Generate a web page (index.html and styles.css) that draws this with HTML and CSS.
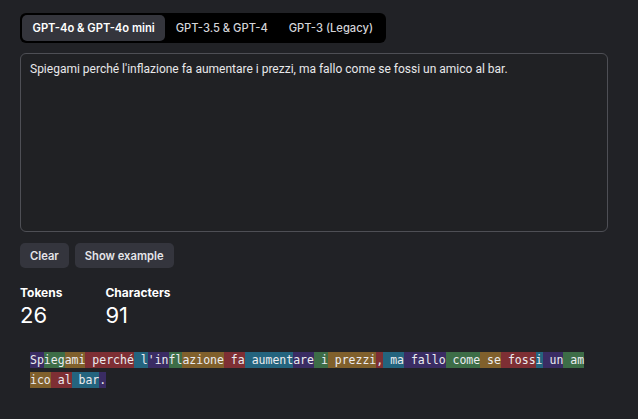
FILE: index.html
```html
<!DOCTYPE html>
<html lang="it">
<head>
<meta charset="utf-8">
<title>Tokenizer</title>
<link rel="stylesheet" href="styles.css">
</head>
<body>
<main class="page">
  <div class="tabs">
    <button class="tab tab-active">GPT-4o &amp; GPT-4o mini</button>
    <button class="tab">GPT-3.5 &amp; GPT-4</button>
    <button class="tab">GPT-3 (Legacy)</button>
  </div>
  <div class="input">Spiegami perché l'inflazione fa aumentare i prezzi, ma fallo come se fossi un amico al bar.</div>
  <div class="actions">
    <button class="btn">Clear</button>
    <button class="btn">Show example</button>
  </div>
  <div class="stats">
    <div class="stat">
      <div class="stat-label">Tokens</div>
      <div class="stat-value">26</div>
    </div>
    <div class="stat">
      <div class="stat-label">Characters</div>
      <div class="stat-value">91</div>
    </div>
  </div>
  <div class="tokens"><span class="t c0">Sp</span><span class="t c1">ieg</span><span class="t c2">ami</span><span class="t c3"> perché</span><span class="t c4"> l</span><span class="t c0">'in</span><span class="t c1">fl</span><span class="t c2">azione</span><span class="t c3"> fa</span><span class="t c4"> aument</span><span class="t c0">are</span><span class="t c1"> i</span><span class="t c2"> prezzi</span><span class="t c3">,</span><span class="t c4"> ma</span><span class="t c0"> fallo</span><span class="t c1"> come</span><span class="t c2"> se</span><span class="t c3"> foss</span><span class="t c4">i</span><span class="t c0"> un</span><span class="t c1"> am</span><span class="t c2">ico</span><span class="t c3"> al</span><span class="t c4"> bar</span><span class="t c0">.</span></div>
</main>
</body>
</html>
```

FILE: styles.css
```css
* { box-sizing: border-box; }

body {
  margin: 0;
  background: #212226;
  color: #ececf1;
  font-family: Inter, "Noto Sans", sans-serif;
}

.page {
  padding: 13px 20px 0 20px;
  width: 628px;
}

.tabs {
  display: inline-flex;
  background: #000000;
  border-radius: 6px;
  padding: 2px;
}

.tab {
  border: 0;
  background: transparent;
  color: #d4d4d8;
  font-family: Inter, "Noto Sans", sans-serif;
  font-size: 11.2px;
  font-weight: 500;
  height: 26px;
  padding: 0 10.5px;
  border-radius: 5px;
  cursor: pointer;
}

.tab-active {
  background: #34353c;
  color: #ffffff;
  font-weight: 600;
}

.input {
  margin-top: 10px;
  height: 179px;
  border: 1px solid #4e4f55;
  border-radius: 6px;
  background: #202124;
  padding: 7px 9px;
  font-family: Roboto, "Noto Sans", sans-serif;
  font-size: 12px;
  line-height: 16px;
  color: #e8e8ea;
}

.actions {
  display: flex;
  gap: 6px;
  margin-top: 11px;
}

.btn {
  border: 0;
  background: #34353d;
  color: #e6e6ea;
  font-family: Inter, "Noto Sans", sans-serif;
  font-size: 11.2px;
  font-weight: 600;
  height: 25px;
  padding: 0 10px;
  border-radius: 5px;
}

.stats {
  display: flex;
  gap: 43px;
  margin-top: 17px;
}

.stat-label {
  font-size: 12px;
  font-weight: 700;
  line-height: 16px;
  color: #ffffff;
}

.stat-value {
  font-size: 22px;
  font-weight: 400;
  line-height: 28px;
  color: #ffffff;
}

.tokens {
  margin-top: 21px;
  padding-left: 10px;
  width: calc(80ch + 12px);
  font-family: "DejaVu Sans Mono", "Liberation Mono", monospace;
  font-size: 11.5px;
  line-height: 20px;
  color: #ececf0;
  white-space: pre-wrap;
  word-break: break-all;
}

.t { padding: 1px 0; }
.c0 { background: rgba(107, 64, 216, 0.35); }
.c1 { background: rgba(104, 222, 122, 0.4); }
.c2 { background: rgba(244, 172, 54, 0.45); }
.c3 { background: rgba(239, 65, 70, 0.45); }
.c4 { background: rgba(39, 181, 234, 0.45); }
```
